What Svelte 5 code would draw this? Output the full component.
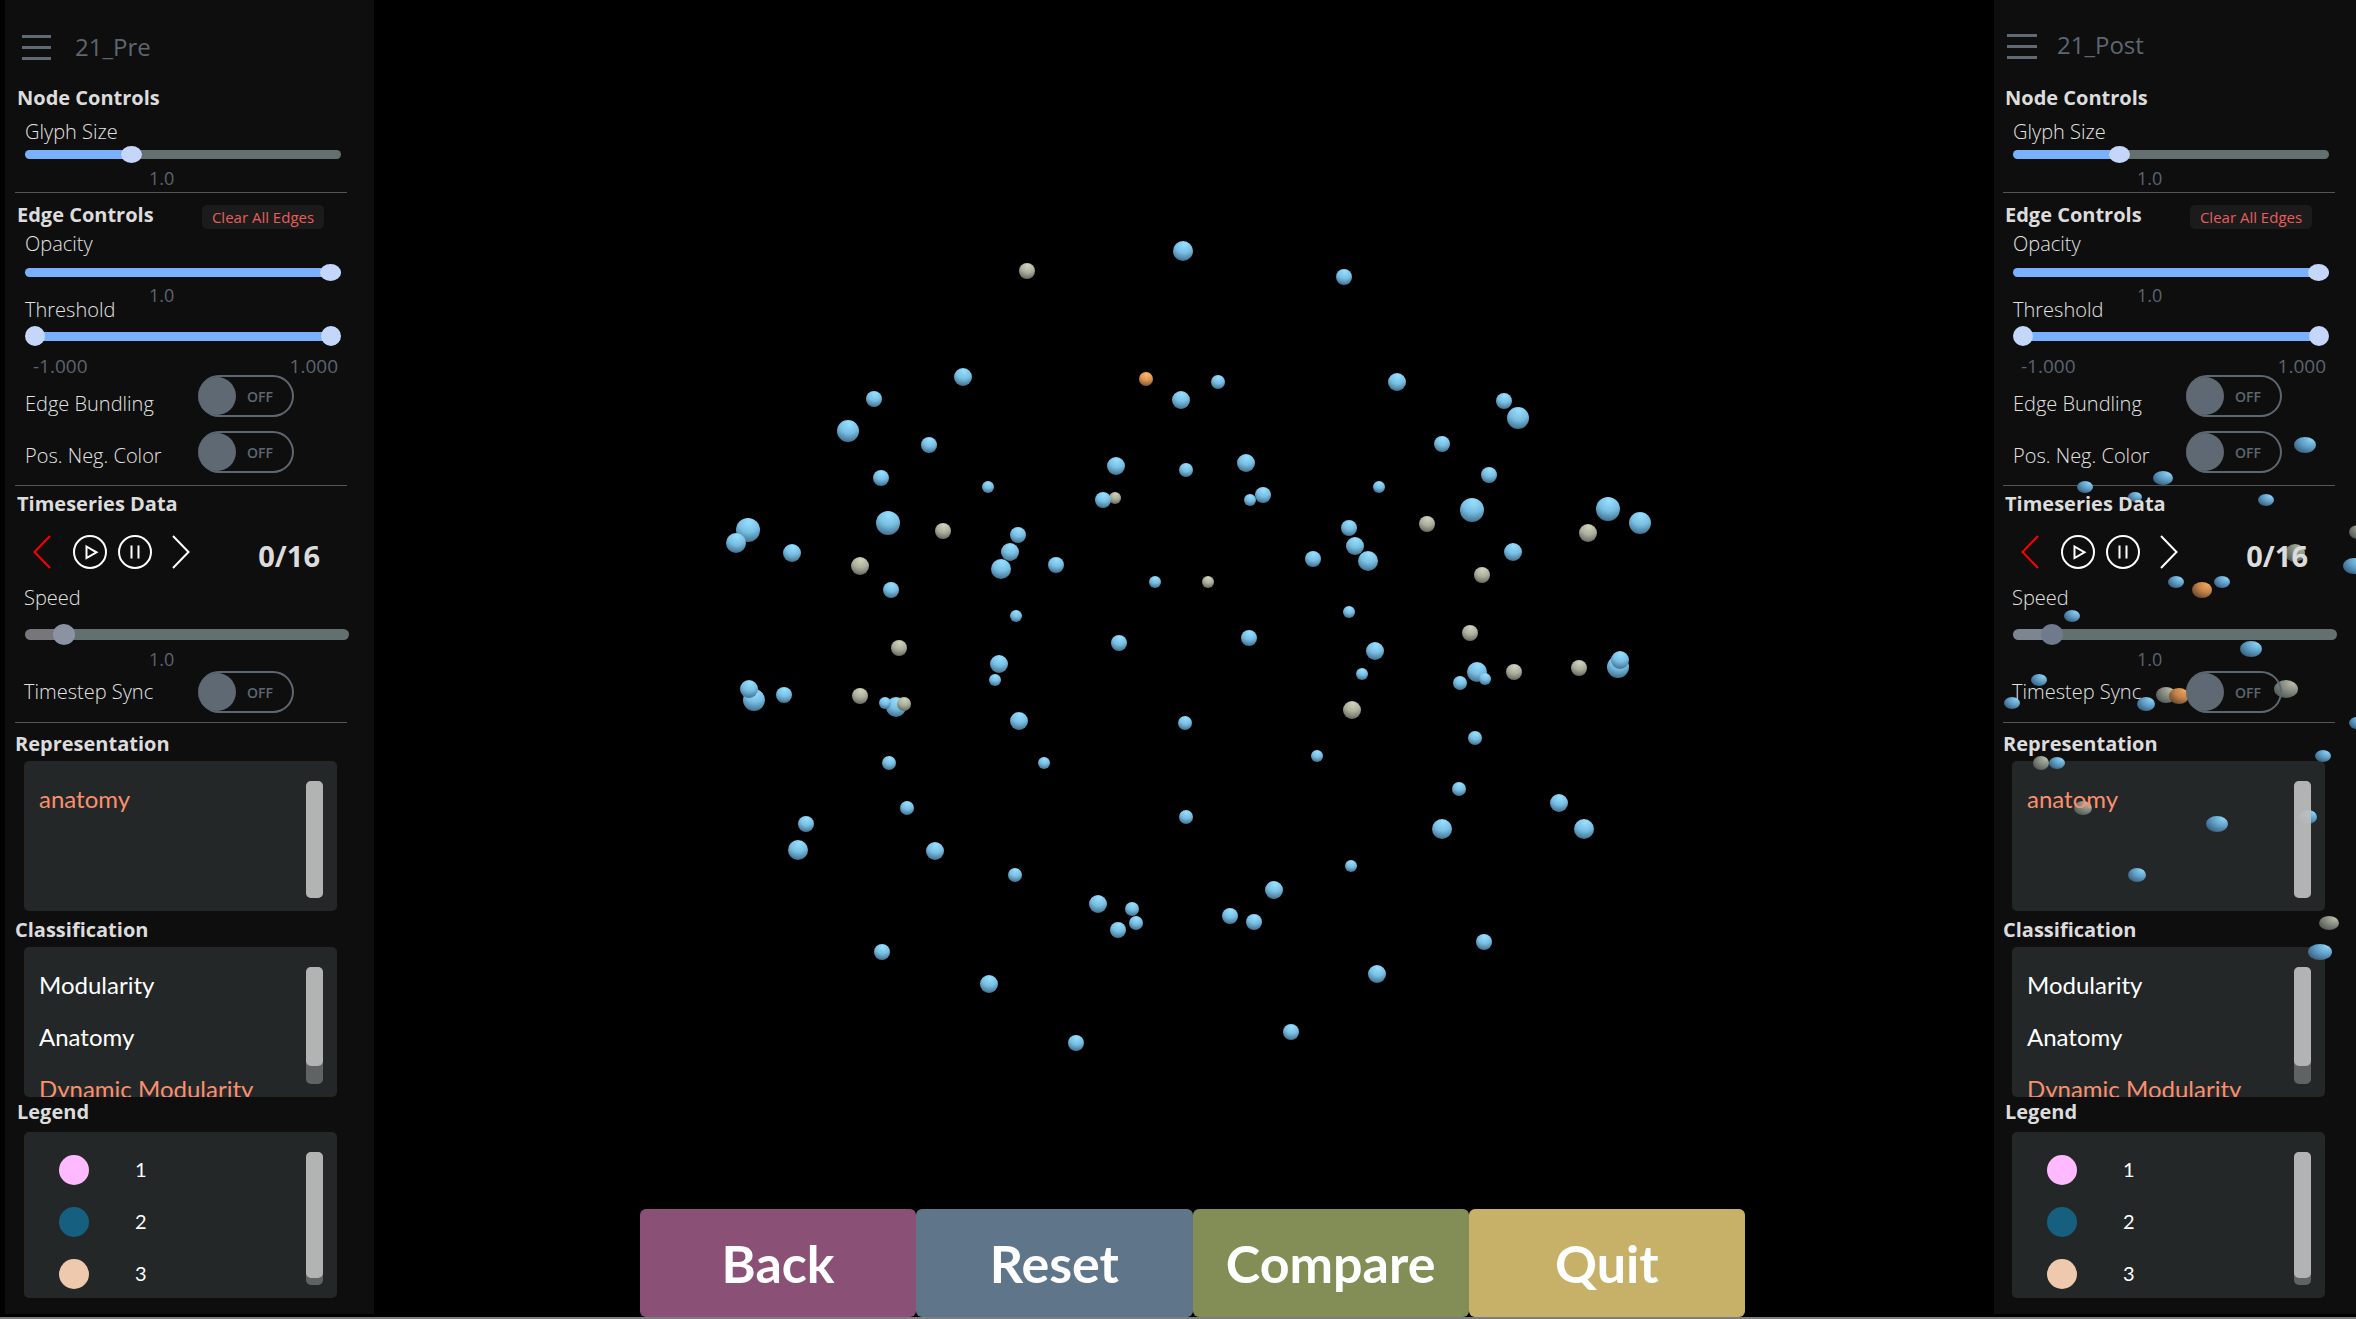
<script>
  const BLUE = 'blue', TAN = 'tan', ORANGE = 'orange';

  // Brain regions facing the camera: x, y, radius, colour
  const frontNodes = [
    [1183, 251, 10], [1027, 271, 8, TAN], [963, 377, 9], [874, 399, 8], [848, 431, 11],
    [929, 445, 8], [881, 478, 8], [988, 487, 6], [1146, 379, 7, ORANGE], [1181, 400, 9],
    [1116, 466, 9], [1186, 470, 7], [1115, 498, 6, TAN], [1103, 500, 8], [888, 523, 12],
    [748, 530, 12], [736, 543, 10], [792, 553, 9], [943, 531, 8, TAN], [860, 566, 9, TAN],
    [1018, 535, 8], [1010, 552, 9], [1001, 569, 10], [1056, 565, 8], [891, 590, 8],
    [1016, 616, 6], [1155, 582, 6], [1344, 277, 8], [1218, 382, 7], [1397, 382, 9],
    [1504, 401, 8], [1518, 418, 11], [1442, 444, 8], [1489, 475, 8], [1246, 463, 9],
    [1250, 500, 6], [1263, 495, 8], [1379, 487, 6], [1472, 510, 12], [1427, 524, 8, TAN],
    [1608, 509, 12], [1640, 523, 11], [1588, 533, 9, TAN], [1349, 528, 8], [1355, 546, 9],
    [1368, 561, 10], [1313, 559, 8], [1513, 552, 9], [1482, 575, 8, TAN], [1208, 582, 6, TAN],
    [1349, 612, 6], [1470, 633, 8, TAN], [899, 648, 8, TAN], [754, 700, 11], [749, 689, 9],
    [784, 695, 8], [860, 696, 8, TAN], [896, 707, 10], [885, 703, 6], [904, 704, 7, TAN],
    [999, 664, 9], [995, 680, 6], [1019, 721, 9], [1119, 643, 8], [1185, 723, 7],
    [889, 763, 7], [1044, 763, 6], [907, 808, 7], [806, 824, 8], [798, 850, 10],
    [935, 851, 9], [1015, 875, 7], [1186, 817, 7], [1098, 904, 9], [1132, 909, 7],
    [1136, 923, 7], [1118, 930, 8], [882, 952, 8], [989, 984, 9], [1076, 1043, 8],
    [1249, 638, 8], [1375, 651, 9], [1362, 674, 6], [1477, 672, 10], [1485, 679, 6],
    [1460, 683, 7], [1514, 672, 8, TAN], [1579, 668, 8, TAN], [1618, 667, 11], [1620, 660, 9],
    [1352, 710, 9, TAN], [1317, 756, 6], [1475, 738, 7], [1459, 789, 7], [1559, 803, 9],
    [1584, 829, 10], [1442, 829, 10], [1351, 866, 6], [1274, 890, 9], [1230, 916, 8],
    [1254, 922, 8], [1484, 942, 8], [1377, 974, 9], [1291, 1032, 8]
  ];

  // Regions at the edge of the view, stretched by perspective: x, y, rx, ry, colour
  const edgeNodes = [
    [2305, 445, 11, 8], [2163, 478, 10, 7], [2085, 487, 8, 6], [2135, 497, 7, 5],
    [2266, 500, 8, 6], [2358, 532, 9, 7, TAN], [2354, 566, 11, 8], [2295, 553, 10, 9, TAN],
    [2176, 582, 8, 6], [2202, 590, 10, 8, ORANGE], [2222, 582, 8, 6], [2072, 616, 8, 6],
    [2251, 649, 11, 8], [2039, 680, 8, 6], [2012, 703, 8, 6], [2146, 704, 9, 7],
    [2166, 695, 10, 8, TAN], [2179, 696, 10, 8, ORANGE], [2286, 689, 12, 9, TAN],
    [2357, 723, 8, 6], [2323, 756, 8, 6], [2041, 763, 8, 7, TAN], [2057, 763, 8, 6],
    [2083, 808, 9, 7, TAN], [2217, 824, 11, 8], [2137, 875, 9, 7], [2308, 817, 9, 7],
    [2329, 923, 10, 7, TAN], [2320, 952, 12, 8]
  ];

  const legend = [
    { color: '#ffb9ff', name: '1' },
    { color: '#165f7f', name: '2' },
    { color: '#eec9ae', name: '3' }
  ];
  const actions = ['Back', 'Reset', 'Compare', 'Quit'];
</script>

{#snippet slider(id, value, kind)}
  <input class="range {kind}" {id} type="range" min="0" max="1000" {value} style="--fill: {value / 10}%" />
{/snippet}

{#snippet toggle(id, text)}
  <div class="toggle-row {id.slice(id.indexOf('-') + 1)}">
    <label class="label" for={id}>{text}</label>
    <div class="toggle"><input {id} type="checkbox" /><span>OFF</span></div>
  </div>
{/snippet}

{#snippet scrollbar(used)}
  <div class="scroll"><div class="scroll-thumb" style="height: {used}%"></div></div>
{/snippet}

{#snippet panel(side, title)}
  <aside class="panel {side}">
    <header class="top">
      <button class="menu" aria-label="Menu"><i></i><i></i><i></i></button>
      <span class="title">{title}</span>
    </header>

    <section class="node">
      <h2>Node Controls</h2>
      <label class="label" for="{side}-glyph">Glyph Size</label>
      {@render slider(`${side}-glyph`, 325, 'oval')}
      <output class="value">1.0</output>
    </section>

    <section class="edge">
      <div class="head-row">
        <h2>Edge Controls</h2>
        <button class="clear">Clear All Edges</button>
      </div>
      <label class="label" for="{side}-opacity">Opacity</label>
      {@render slider(`${side}-opacity`, 1000, 'oval')}
      <output class="value">1.0</output>
      <label class="label threshold" for="{side}-low">Threshold</label>
      <div class="double">
        <input class="range pair" id="{side}-low" type="range" min="-1" max="1" step="0.001" value="-1" />
        <input class="range pair" aria-label="Threshold maximum" type="range" min="-1" max="1" step="0.001" value="1" />
      </div>
      <div class="limits"><output>-1.000</output><output>1.000</output></div>
      {@render toggle(`${side}-bundling`, 'Edge Bundling')}
      {@render toggle(`${side}-sign`, 'Pos. Neg. Color')}
    </section>

    <section class="time">
      <h2>Timeseries Data</h2>
      <div class="transport">
        <button aria-label="Previous timestep" class="prev">
          <svg width="18" height="34" viewBox="0 0 18 34"><path d="M17 1 1.500 17 17 33" /></svg>
        </button>
        <button aria-label="Play">
          <svg width="34" height="34" viewBox="0 0 34 34"><circle cx="17" cy="17" r="16" /><path d="M13.500 11.500 23.500 17.300 13.500 23Z" /></svg>
        </button>
        <button aria-label="Pause">
          <svg width="34" height="34" viewBox="0 0 34 34"><circle cx="17" cy="17" r="16" /><path d="M13.500 10.500v13M20.500 10.500v13" /></svg>
        </button>
        <button aria-label="Next timestep" class="next">
          <svg width="18" height="34" viewBox="0 0 18 34"><path d="M1 1 16.500 17 1 33" /></svg>
        </button>
        <output class="count">0/16</output>
      </div>
      <label class="label" for="{side}-speed">Speed</label>
      {@render slider(`${side}-speed`, 93, 'speed')}
      <output class="value">1.0</output>
      {@render toggle(`${side}-sync`, 'Timestep Sync')}
    </section>

    <section class="data">
      <h2>Representation</h2>
      <div class="box">
        <ul><li><button class="on">anatomy</button></li></ul>
        {@render scrollbar(100)}
      </div>
      <h2>Classification</h2>
      <div class="box">
        <ul>
          <li><button>Modularity</button></li>
          <li><button>Anatomy</button></li>
          <li><button class="on">Dynamic Modularity</button></li>
        </ul>
        {@render scrollbar(85)}
      </div>
      <h2 class="legend-head">Legend</h2>
      <div class="box legend">
        <ul>
          {#each legend as entry}
            <li class="entry"><i style="background: {entry.color}"></i><span>{entry.name}</span></li>
          {/each}
        </ul>
        {@render scrollbar(95)}
      </div>
    </section>
  </aside>
{/snippet}

<div class="app">
  {@render panel('left', '21_Pre')}
  <main>
    <nav class="actions">
      {#each actions as action}
        <button class={action.toLowerCase()}>{action}</button>
      {/each}
    </nav>
  </main>
  {@render panel('right', '21_Post')}

  <svg class="scene" viewBox="0 0 2356 1317" preserveAspectRatio="xMidYMid slice" aria-hidden="true">
    <defs>
      <radialGradient id="blue" cx="0.55" cy="0.15" r="0.9">
        <stop offset="0" stop-color="#98dfff" /><stop offset="0.5" stop-color="#78bfe3" /><stop offset="1" stop-color="#3b6785" />
      </radialGradient>
      <radialGradient id="tan" cx="0.55" cy="0.15" r="0.9">
        <stop offset="0" stop-color="#d0d3be" /><stop offset="0.5" stop-color="#acaf9c" /><stop offset="1" stop-color="#5e6058" />
      </radialGradient>
      <radialGradient id="orange" cx="0.55" cy="0.15" r="0.9">
        <stop offset="0" stop-color="#ffb86c" /><stop offset="0.5" stop-color="#dd9650" /><stop offset="1" stop-color="#784e2c" />
      </radialGradient>
      <radialGradient id="side-blue" cx="0.8" cy="0.15" r="1">
        <stop offset="0" stop-color="#8ed3f3" /><stop offset="0.5" stop-color="#609fc8" /><stop offset="1" stop-color="#365a78" />
      </radialGradient>
      <radialGradient id="side-tan" cx="0.8" cy="0.15" r="1">
        <stop offset="0" stop-color="#b9bea9" /><stop offset="0.5" stop-color="#858b80" /><stop offset="1" stop-color="#4c5555" />
      </radialGradient>
      <radialGradient id="side-orange" cx="0.8" cy="0.15" r="1">
        <stop offset="0" stop-color="#f0a75e" /><stop offset="0.5" stop-color="#c28249" /><stop offset="1" stop-color="#65432c" />
      </radialGradient>
    </defs>
    {#each frontNodes as [x, y, r, color = BLUE]}
      <circle cx={x} cy={y} {r} fill="url(#{color})" />
    {/each}
    {#each edgeNodes as [x, y, rx, ry, color = BLUE]}
      <ellipse cx={x} cy={y} {rx} {ry} fill="url(#side-{color})" />
    {/each}
  </svg>
</div>

<style>
  :global(body) { background: #000; }
  .app {
    position: relative;
    isolation: isolate;
    display: flex;
    box-sizing: border-box;
    min-height: 100vh;
    padding-left: 5px;
    border-bottom: 2px solid #7d7d7d;
    overflow: hidden;
    background: #000;
    color: #e2e2e2;
    font-family: "Open Sans", "Noto Sans", sans-serif;
  }
  .scene { position: absolute; inset: 0; z-index: 1; width: 100%; height: 100%; pointer-events: none; }
  button { margin: 0; padding: 0; border: 0; background: none; color: inherit; font: inherit; cursor: pointer; }
  input { margin: 0; }
  ul { margin: 0; padding: 0; list-style: none; }

  .panel {
    flex: none;
    box-sizing: border-box;
    width: 369px;
    margin-bottom: 3px;
    padding: 0 27px 16px 10px;
    background: #0e0e0e;
    --speed-fill: #77777b;
    --speed-thumb: #8b93a2;
  }
  .panel.right {
    width: 362px;
    padding: 0 21px 16px 9px;
    --speed-fill: #7e8592;
    --speed-thumb: #707a8d;
  }
  h2, .label, .title, .value, .limits, .count, .clear, .range, .toggle, .transport, li, .scroll { position: relative; z-index: 2; }

  .top { display: flex; align-items: center; gap: 24px; box-sizing: border-box; height: 84px; padding: 11px 0 0 7px; }
  .right .top { gap: 20px; padding: 8px 0 0 4px; }
  .menu { display: flex; flex-direction: column; gap: 8px; width: 29px; }
  .right .menu { width: 30px; }
  .menu i { height: 3px; background: #606a74; }
  .title { padding-bottom: 2px; color: #5d6671; font-size: 24px; line-height: 32px; }

  section { display: flex; flex-direction: column; border-bottom: 1px solid #555; }
  h2 { margin: 0; padding-left: 2px; color: #dcdcdc; font-size: 20px; font-weight: 700; line-height: 28px; }
  .label { padding-left: 10px; font-size: 20px; font-weight: 300; line-height: 24px; }
  .value { align-self: flex-start; padding-left: 134px; color: #5b6470; font-size: 18px; line-height: 24px; }

  .node { padding-bottom: 2px; }
  .node .label { margin-top: 8px; }
  .node .value { margin-top: 2px; }
  .edge { padding: 8px 0 12px; }
  .edge > .label { margin-top: 3px; }
  .edge > .oval { margin-top: 6px; }
  .edge .value { margin-top: 1px; }
  .edge > .threshold { margin-top: -9px; }
  .time { padding: 4px 0 9px; }
  .time > .label { margin-top: 17px; }
  .time .value { margin-top: 3px; }
  .time .label { padding-left: 9px; }

  .head-row { display: flex; justify-content: space-between; align-items: flex-end; padding-right: 23px; }
  .clear { width: 122px; height: 24px; border-radius: 5px; background: #1b1b1b; color: #e85d5d; font-size: 15px; line-height: 24px; }

  .range {
    --track: 9px;
    --thumb-w: 21px;
    --thumb-h: 17px;
    --on: #7ab1ff;
    --off: #647070;
    --knob: #c4d6fa;
    appearance: none;
    width: 316px;
    height: 20px;
    margin-left: 10px;
    background: none;
  }
  .range::-webkit-slider-runnable-track {
    height: var(--track);
    border-radius: 6px;
    background: linear-gradient(to right, var(--on) calc(var(--fill) + 10px), var(--off) 0);
  }
  .range::-webkit-slider-thumb {
    appearance: none;
    width: var(--thumb-w);
    height: var(--thumb-h);
    margin-top: calc((var(--track) - var(--thumb-h)) / 2);
    border-radius: 50%;
    background: var(--knob);
  }
  .speed { --track: 11px; --thumb-w: 22px; --thumb-h: 21px; --on: var(--speed-fill); --knob: var(--speed-thumb); width: 324px; margin-top: 14px; }
  .double { display: grid; margin: 4px 0 0 10px; }
  .pair { grid-area: 1 / 1; --thumb-w: 20px; --thumb-h: 20px; margin: 0; pointer-events: none; }
  .pair::-webkit-slider-thumb { pointer-events: auto; }
  .pair::-webkit-slider-runnable-track { background: none; }
  .pair:first-child::-webkit-slider-runnable-track { background: linear-gradient(to right, transparent 8px, var(--on) 8px calc(100% - 8px), transparent 0); }
  .limits { display: flex; justify-content: space-between; margin-top: 8px; padding: 0 9px 0 18px; color: #5b6470; font-size: 19px; line-height: 24px; }

  .toggle-row { display: flex; align-items: center; justify-content: space-between; padding-right: 53px; }
  .bundling { margin-top: -3px; }
  .bundling .label { padding-top: 15px; }
  .sign { margin-top: 14px; }
  .sign .label { padding-top: 8px; }
  .toggle {
    display: flex;
    align-items: center;
    gap: 11px;
    box-sizing: border-box;
    width: 96px;
    height: 42px;
    border: 2px solid #5d6772;
    border-left-width: 0;
    border-radius: 21px;
    color: #5d6772;
    font-size: 14px;
    font-weight: 600;
  }
  .toggle input { appearance: none; width: 38px; height: 38px; border-radius: 50%; background: #5f6973; }

  .transport { display: flex; align-items: center; height: 34px; margin-top: 17px; padding: 0 27px 0 18px; color: #fff; }
  .transport button { display: flex; margin-right: 11px; }
  .transport .prev { margin-right: 22px; color: #f00; }
  .transport .next { margin: 0 0 0 9px; }
  .transport svg { fill: none; stroke: currentColor; stroke-width: 2; }
  .count { margin-left: auto; padding-top: 8px; color: #dcdcdc; font-size: 29px; font-weight: 700; line-height: 34px; }

  .data { padding-top: 7px; border: 0; }
  .data h2 { padding-left: 0; }
  .box {
    display: flex;
    justify-content: space-between;
    box-sizing: border-box;
    height: 150px;
    margin: 3px 10px 5px 9px;
    padding: 20px 14px 13px 15px;
    border-radius: 5px;
    overflow: hidden;
    background: #232728;
    color: #fff;
    font-family: Lato, "Open Sans", sans-serif;
    font-size: 24px;
    line-height: 36px;
  }
  .box li { height: 52px; white-space: nowrap; }
  .box .on { color: #fb8f6d; }
  .data .legend-head { margin-top: -4px; padding-left: 2px; }
  .legend { height: 166px; margin-top: 6px; margin-bottom: 0; font-size: 20px; }
  .entry { display: flex; align-items: flex-start; gap: 46px; padding-left: 20px; line-height: 34px; }
  .entry i { width: 30px; height: 30px; margin-top: 3px; border-radius: 50%; }
  .scroll { flex: none; width: 17px; border-radius: 5px; background: rgba(255, 255, 255, 0.28); }
  .scroll-thumb { border-radius: 5px; background: #bbbbbbe6; }

  main { display: flex; flex: 1; align-items: flex-end; padding: 0 249px 0 266px; }
  .actions { position: relative; z-index: 2; display: flex; flex: 1; }
  .actions button {
    flex: 1;
    height: 108px;
    border-radius: 6px;
    color: #fff;
    font-family: Lato, "Open Sans", sans-serif;
    font-size: 52px;
    font-weight: 700;
  }
  .back { background: #8a5075; }
  .reset { background: #5f7589; }
  .compare { background: #838d56; }
  .quit { background: #c7b068; }
</style>
